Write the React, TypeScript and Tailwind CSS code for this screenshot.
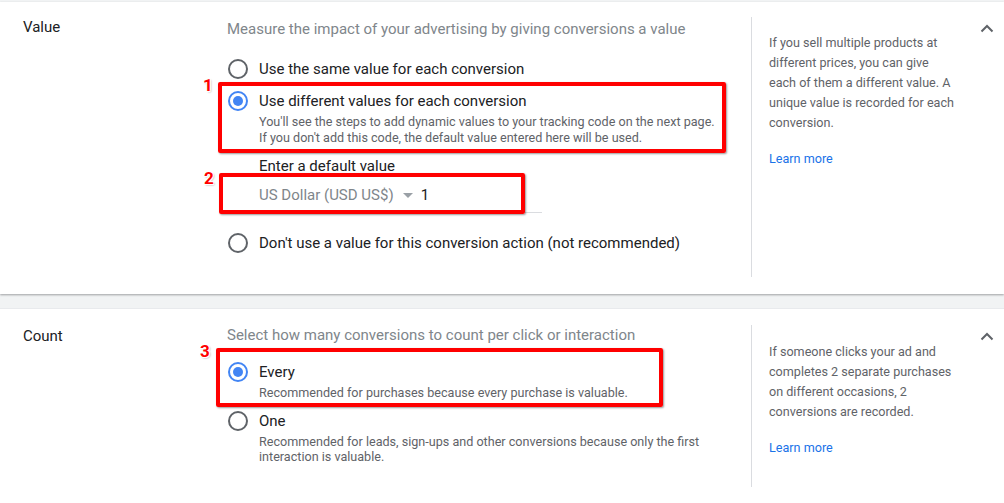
import React from "react";

const TEXT = "text-[#202124]";
const MUTED = "text-[#80868b]";
const SUB = "text-[#5f6368]";

function Radio({ checked }: { checked?: boolean }) {
  return (
    <span
      className={
        "flex h-[20px] w-[20px] shrink-0 items-center justify-center rounded-full border-2 " +
        (checked ? "border-[#4285f4]" : "border-[#5f6368]")
      }
    >
      {checked && <span className="h-[10px] w-[10px] rounded-full bg-[#4285f4]" />}
    </span>
  );
}

function Option({
  label,
  checked,
  sub,
}: {
  label: string;
  checked?: boolean;
  sub?: string[];
}) {
  return (
    <div className="flex items-start gap-[11px] pl-[1px]">
      <div className="flex h-[20px] items-center">
        <Radio checked={checked} />
      </div>
      <div>
        <div className={`text-[15px] leading-[20px] ${TEXT}`}>{label}</div>
        {sub && (
          <div className={`mt-[3px] text-[12.6px] leading-[15.5px] ${SUB}`}>
            {sub.map((s) => (
              <div key={s}>{s}</div>
            ))}
          </div>
        )}
      </div>
    </div>
  );
}

function Chevron() {
  return (
    <svg width="14" height="9" viewBox="0 0 14 9" className="text-[#5f6368]">
      <path d="M1.5 7.5 L7 2 L12.5 7.5" fill="none" stroke="currentColor" strokeWidth="2" />
    </svg>
  );
}

function Aside({ lines, top }: { lines: string; top: string }) {
  return (
    <div className={`flex border-l border-[#dadce0] pl-[17px] ${top}`}>
      <div className={`w-[185px] text-[12.6px] leading-[20px] ${SUB}`}>
        <p>{lines}</p>
        <p className="mt-[16px] text-[#1a73e8]">Learn more</p>
      </div>
    </div>
  );
}

function Mark({ n, className }: { n: string; className: string }) {
  return (
    <span
      className={`absolute text-[17px] font-bold leading-none text-[#ff0000] ${className}`}
      style={{ textShadow: "1px 1px 0 #fff, -1px -1px 0 #fff, 1px -1px 0 #fff, -1px 1px 0 #fff, 1px 1px 2px #888" }}
    >
      {n}
    </span>
  );
}

export default function App() {
  return (
    <div className="relative min-h-[503px] w-[1004px] overflow-hidden bg-[#f1f3f4] pt-[2px] font-['Roboto','Liberation_Sans',sans-serif]">
      {/* Value card */}
      <section className="flex h-[292px] bg-white shadow-[0_1px_2px_rgba(60,64,67,0.45)]">
        <div className={`w-[227px] pl-[23px] pt-[15px] text-[15px] leading-[20px] ${TEXT}`}>Value</div>
        <div className="w-[524px] pt-[17px]">
          <p className={`text-[15px] leading-[20px] ${MUTED}`}>
            Measure the impact of your advertising by giving conversions a value
          </p>
          <div className="mt-[20px]">
            <Option label="Use the same value for each conversion" />
          </div>
          <div className="mt-[12px]">
            <Option
              checked
              label="Use different values for each conversion"
              sub={[
                "You'll see the steps to add dynamic values to your tracking code on the next page.",
                "If you don't add this code, the default value entered here will be used.",
              ]}
            />
          </div>
          <div className="pl-[32px]">
            <div className={`mt-[11px] text-[15px] leading-[20px] ${TEXT}`}>Enter a default value</div>
            <div className="mt-[9px] flex h-[28px] items-start">
              <div className={`flex items-center text-[15px] leading-[20px] ${MUTED}`}>
                US Dollar (USD US$)
                <span className="ml-[9px] mt-[1px] h-0 w-0 border-x-[5px] border-t-[5px] border-x-transparent border-t-[#9aa0a6]" />
              </div>
              <div className={`ml-[8px] h-[28px] w-[121px] border-b border-[#dadce0] text-[15px] leading-[20px] ${TEXT}`}>
                1
              </div>
            </div>
          </div>
          <div className="mt-[20px]">
            <Option label="Don't use a value for this conversion action (not recommended)" />
          </div>
        </div>
        <div className="pt-[15px]">
          <div className="h-[260px]">
            <Aside
              top="h-full pt-[16px]"
              lines="If you sell multiple products at different prices, you can give each of them a different value. A unique value is recorded for each conversion."
            />
          </div>
        </div>
        <div className="ml-auto pr-[10px] pt-[22px]">
          <Chevron />
        </div>
      </section>

      {/* Count card */}
      <section className="mt-[14px] flex h-[200px] bg-white border-t border-[#e8eaed]">
        <div className={`w-[227px] pl-[23px] pt-[17px] text-[15px] leading-[20px] ${TEXT}`}>Count</div>
        <div className="w-[524px] pt-[16px]">
          <p className={`text-[15px] leading-[20px] ${MUTED}`}>
            Select how many conversions to count per click or interaction
          </p>
          <div className="mt-[17px]">
            <Option checked label="Every" sub={["Recommended for purchases because every purchase is valuable."]} />
          </div>
          <div className="mt-[10px]">
            <Option
              label="One"
              sub={[
                "Recommended for leads, sign-ups and other conversions because only the first",
                "interaction is valuable.",
              ]}
            />
          </div>
        </div>
        <div className="pt-[16px]">
          <div className="h-[162px]">
            <Aside
              top="h-full pt-[17px]"
              lines="If someone clicks your ad and completes 2 separate purchases on different occasions, 2 conversions are recorded."
            />
          </div>
        </div>
        <div className="ml-auto pr-[10px] pt-[23px]">
          <Chevron />
        </div>
      </section>

      {/* annotation overlays */}
      <div className="absolute left-[218px] top-[82px] h-[71px] w-[508px] rounded-[2px] border-4 border-[#ff0000] shadow-[1px_1px_2px_rgba(0,0,0,0.4)]" />
      <div className="absolute left-[219px] top-[173px] h-[41px] w-[306px] rounded-[2px] border-4 border-[#ff0000] shadow-[1px_1px_2px_rgba(0,0,0,0.4)]" />
      <div className="absolute left-[216px] top-[348px] h-[59px] w-[447px] rounded-[2px] border-4 border-[#ff0000] shadow-[1px_1px_2px_rgba(0,0,0,0.4)]" />
      <Mark n="1" className="left-[203px] top-[77px]" />
      <Mark n="2" className="left-[204px] top-[170px]" />
      <Mark n="3" className="left-[200px] top-[343px]" />
    </div>
  );
}
